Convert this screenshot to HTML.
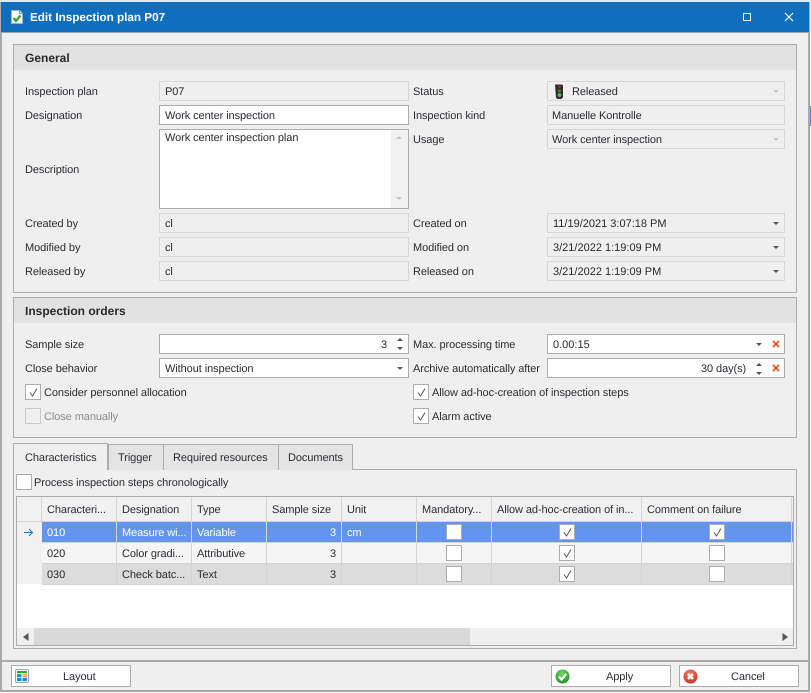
<!DOCTYPE html>
<html><head><meta charset="utf-8">
<style>
html,body{margin:0;padding:0;width:811px;height:693px;overflow:hidden;background:#f6f6f6}
body{position:relative;font:11px "Liberation Sans",sans-serif;color:#2b2b33;text-rendering:geometricPrecision}
div,span,svg{position:absolute;box-sizing:border-box}
.t{white-space:nowrap;line-height:14px;height:14px;margin-top:1px;letter-spacing:-.08px}
.d{letter-spacing:0}
.b{font-weight:bold;font-size:12px;color:#2a2a2a;letter-spacing:0}
.f{border:1px solid #d6d6d6;height:20px;background:#efefef}
.w{border:1px solid #acacac;background:#fff;height:20px}
.g{position:absolute;border:1px solid #acacac;background:#efefef}
.h{position:absolute;background:#e2e2e2;left:0;right:0;top:0;height:25px}
.dn{width:0;height:0;border-left:3.500px solid transparent;border-right:3.500px solid transparent;border-top:3.500px solid #555}
.dd{border-top-color:#c2c2c2}
.up{width:0;height:0;border-left:3.500px solid transparent;border-right:3.500px solid transparent;border-bottom:3.500px solid #555}
.c{width:16px;height:16px;border:1px solid #acacac;background:#fff}
.tab{border:1px solid #acacac;background:#e4e4e4;border-bottom:0}
.col{width:1px;background:#d4d4d4}
.btn{border:1px solid #acacac;background:#fff;height:22px;top:665px}
</style></head><body>
<!-- window -->
<div style="left:0;top:0;width:811px;height:2px;background:#e8e8e8"></div>
<div style="left:809px;top:106px;width:2px;height:20px;background:#5a86d8"></div>
<div style="left:0;top:2px;width:810px;height:690px;background:#efefef;border:2px solid #a9a9a9;border-top:0"></div>
<div style="left:1px;top:2px;width:808px;height:30px;background:#106ebe"></div>
<div style="left:1px;top:32px;width:808px;height:1px;background:#9aa5ae"></div>
<svg style="left:11px;top:10px" width="12" height="14" viewBox="0 0 12 14"><path d="M.5.500h8l3 3v10H.5z" fill="#fff" stroke="#9fb0c4"/><path d="M8.500.500v3h3" fill="#c9d4e0" stroke="#8a9ab0"/><path d="M2.500 8l2.500 3 4.500-5.500" fill="none" stroke="#2fa52a" stroke-width="2.200"/></svg>
<div class="t b" style="left:30px;top:10px;font-size:11.7px;color:#fff">Edit Inspection plan P07</div>
<div style="left:743px;top:13px;width:8px;height:8px;border:1.300px solid #fff"></div>
<svg style="left:784px;top:12px" width="10" height="10" viewBox="0 0 10 10"><path d="M1 1l8 8M9 1l-8 8" stroke="#fff" stroke-width="1.200"/></svg>

<!-- General -->
<div class="g" style="left:13px;top:44px;width:784px;height:249px"><div class="h"></div></div>
<div class="t b" style="left:25px;top:50px">General</div>
<div class="t" style="left:25px;top:84px">Inspection plan</div>
<div class="t" style="left:25px;top:108px">Designation</div>
<div class="t" style="left:25px;top:162px">Description</div>
<div class="t" style="left:25px;top:216px">Created by</div>
<div class="t" style="left:25px;top:240px">Modified by</div>
<div class="t" style="left:25px;top:264px">Released by</div>
<div class="f" style="left:159px;top:81px;width:250px"></div>
<div class="t" style="left:165px;top:84px">P07</div>
<div class="w" style="left:159px;top:105px;width:250px"></div>
<div class="t" style="left:165px;top:108px">Work center inspection</div>
<div class="w" style="left:159px;top:129px;width:250px;height:80px"></div>
<div style="left:391px;top:130px;width:17px;height:78px;background:#f1f1f1"></div>
<div class="t" style="left:165px;top:130px">Work center inspection plan</div>
<div class="up" style="left:396px;top:136px;border-bottom-color:#c2c2c2"></div>
<div class="dn dd" style="left:396px;top:197px"></div>
<div class="f" style="left:159px;top:213px;width:250px"></div><div class="t" style="left:165px;top:216px">cl</div>
<div class="f" style="left:159px;top:237px;width:250px"></div><div class="t" style="left:165px;top:240px">cl</div>
<div class="f" style="left:159px;top:261px;width:250px"></div><div class="t" style="left:165px;top:264px">cl</div>

<div class="t" style="left:413px;top:84px">Status</div>
<div class="t" style="left:413px;top:108px">Inspection kind</div>
<div class="t" style="left:413px;top:132px">Usage</div>
<div class="t" style="left:413px;top:216px">Created on</div>
<div class="t" style="left:413px;top:240px">Modified on</div>
<div class="t" style="left:413px;top:264px">Released on</div>
<div class="f" style="left:547px;top:81px;width:238px"></div>
<svg style="left:555px;top:84px" width="8" height="15" viewBox="0 0 8 15"><path d="M0 .500h7l1 1v12l-2 1.500H2l-1-1.500z" fill="#2d2d2d"/><circle cx="4.500" cy="3" r="1.400" fill="#8a3028"/><circle cx="4.500" cy="7" r="1.400" fill="#8a6a20"/><circle cx="4.500" cy="11" r="1.900" fill="#35d045"/></svg>
<div class="t" style="left:572px;top:84px">Released</div>
<div class="dn dd" style="left:773px;top:90px"></div>
<div class="f" style="left:547px;top:105px;width:238px"></div>
<div class="t" style="left:552px;top:108px">Manuelle Kontrolle</div>
<div class="f" style="left:547px;top:129px;width:238px"></div>
<div class="t" style="left:552px;top:132px">Work center inspection</div>
<div class="dn dd" style="left:773px;top:138px"></div>
<div class="f" style="left:547px;top:213px;width:238px"></div>
<div class="t d" style="left:553px;top:216px">11/19/2021 3:07:18 PM</div>
<div class="dn" style="left:773px;top:222px"></div>
<div class="f" style="left:547px;top:237px;width:238px"></div>
<div class="t d" style="left:553px;top:240px">3/21/2022 1:19:09 PM</div>
<div class="dn" style="left:773px;top:246px"></div>
<div class="f" style="left:547px;top:261px;width:238px"></div>
<div class="t d" style="left:553px;top:264px">3/21/2022 1:19:09 PM</div>
<div class="dn" style="left:773px;top:270px"></div>

<!-- Inspection orders -->
<div class="g" style="left:13px;top:297px;width:784px;height:141px"><div class="h"></div></div>
<div class="t b" style="left:25px;top:303px">Inspection orders</div>
<div class="t" style="left:25px;top:337px">Sample size</div>
<div class="t" style="left:25px;top:361px">Close behavior</div>
<div class="w" style="left:159px;top:334px;width:250px"></div>
<div class="t" style="left:381px;top:337px">3</div>
<div class="up" style="left:397px;top:338px"></div><div class="dn" style="left:397px;top:347px"></div>
<div class="w" style="left:159px;top:358px;width:250px"></div>
<div class="t" style="left:165px;top:361px">Without inspection</div>
<div class="dn" style="left:397px;top:367px"></div>
<div class="t" style="left:413px;top:337px">Max. processing time</div>
<div class="t" style="left:413px;top:361px">Archive automatically after</div>
<div class="w" style="left:547px;top:334px;width:238px"></div>
<div class="t d" style="left:553px;top:337px">0.00:15</div>
<div class="dn" style="left:756px;top:343px"></div>
<svg style="left:772px;top:340px" width="8" height="8" viewBox="0 0 8 8"><path d="M1 1l6 6M7 1l-6 6" stroke="#f0501e" stroke-width="1.800"/></svg>
<div class="w" style="left:547px;top:358px;width:238px"></div>
<div class="t" style="left:701px;top:361px">30 day(s)</div>
<div class="up" style="left:756px;top:363px"></div><div class="dn" style="left:756px;top:372px"></div>
<svg style="left:772px;top:364px" width="8" height="8" viewBox="0 0 8 8"><path d="M1 1l6 6M7 1l-6 6" stroke="#f0501e" stroke-width="1.800"/></svg>

<div class="c" style="left:25px;top:384px"><svg style="left:2px;top:2px" width="11" height="11" viewBox="0 0 11 11"><path d="M2 5.500l2.500 3.500 4.500-7.500" fill="none" stroke="#555" stroke-width="1"/></svg></div>
<div class="t" style="left:44px;top:385px">Consider personnel allocation</div>
<div class="c" style="left:25px;top:408px;background:#efefef;border-color:#c8c8c8"></div>
<div class="t" style="left:44px;top:409px;color:#8a8a8a">Close manually</div>
<div class="c" style="left:413px;top:384px"><svg style="left:2px;top:2px" width="11" height="11" viewBox="0 0 11 11"><path d="M2 5.500l2.500 3.500 4.500-7.500" fill="none" stroke="#555" stroke-width="1"/></svg></div>
<div class="t" style="left:432px;top:385px">Allow ad-hoc-creation of inspection steps</div>
<div class="c" style="left:413px;top:408px"><svg style="left:2px;top:2px" width="11" height="11" viewBox="0 0 11 11"><path d="M2 5.500l2.500 3.500 4.500-7.500" fill="none" stroke="#555" stroke-width="1"/></svg></div>
<div class="t" style="left:432px;top:409px">Alarm active</div>

<!-- Tabs -->
<div class="g" style="left:13px;top:469px;width:784px;height:180px"></div>
<div class="tab" style="left:108px;top:444px;width:56px;height:26px"></div>
<div class="tab" style="left:163px;top:444px;width:116px;height:26px"></div>
<div class="tab" style="left:278px;top:444px;width:75px;height:26px"></div>
<div class="tab" style="left:13px;top:443px;width:95px;height:27px;background:#efefef"></div>
<div style="left:14px;top:468px;width:93px;height:3px;background:#efefef"></div>
<div class="t" style="left:25px;top:450px">Characteristics</div>
<div class="t" style="left:118px;top:450px">Trigger</div>
<div class="t" style="left:173px;top:450px">Required resources</div>
<div class="t" style="left:288px;top:450px">Documents</div>
<div class="c" style="left:16px;top:474px"></div>
<div class="t" style="left:34px;top:475px">Process inspection steps chronologically</div>

<!-- Grid -->
<div style="left:16px;top:496px;width:778px;height:150px;border:1px solid #acacac;background:#fff"></div>
<div style="left:17px;top:497px;width:776px;height:25px;background:#f1f1f1"></div>
<div style="left:17px;top:521px;width:776px;height:1px;background:#d4d4d4"></div>
<div style="left:17px;top:522px;width:25px;height:62px;background:#f1f1f1"></div>
<div style="left:42px;top:522px;width:751px;height:20px;background:#6495ed"></div>
<div style="left:42px;top:543px;width:751px;height:20px;background:#f5f5f5"></div>
<div style="left:42px;top:564px;width:751px;height:20px;background:#dcdcdc"></div>
<div style="left:42px;top:542px;width:751px;height:1px;background:#d4d4d4"></div>
<div style="left:42px;top:563px;width:751px;height:1px;background:#d4d4d4"></div>
<div style="left:42px;top:584px;width:751px;height:1px;background:#d4d4d4"></div>
<div class="col" style="left:41px;top:497px;height:25px"></div>
<div class="col" style="left:116px;top:497px;height:88px"></div>
<div class="col" style="left:191px;top:497px;height:88px"></div>
<div class="col" style="left:266px;top:497px;height:88px"></div>
<div class="col" style="left:341px;top:497px;height:88px"></div>
<div class="col" style="left:416px;top:497px;height:88px"></div>
<div class="col" style="left:491px;top:497px;height:88px"></div>
<div class="col" style="left:641px;top:497px;height:88px"></div>
<div class="col" style="left:791px;top:497px;height:88px"></div>
<div class="t" style="left:47px;top:502px">Characteri...</div>
<div class="t" style="left:122px;top:502px">Designation</div>
<div class="t" style="left:197px;top:502px">Type</div>
<div class="t" style="left:272px;top:502px">Sample size</div>
<div class="t" style="left:347px;top:502px">Unit</div>
<div class="t" style="left:422px;top:502px">Mandatory...</div>
<div class="t" style="left:497px;top:502px">Allow ad-hoc-creation of in...</div>
<div class="t" style="left:647px;top:502px">Comment on failure</div>
<svg style="left:24px;top:528px" width="10" height="9" viewBox="0 0 10 9"><path d="M0 4.500h8.500M5 1l3.500 3.500L5 8" fill="none" stroke="#2a6fb5" stroke-width="1"/></svg>
<div class="t" style="left:47px;top:525px;color:#fff">010</div>
<div class="t" style="left:122px;top:525px;color:#fff">Measure wi...</div>
<div class="t" style="left:197px;top:525px;color:#fff">Variable</div>
<div class="t" style="left:330px;top:525px;color:#fff">3</div>
<div class="t" style="left:347px;top:525px;color:#fff">cm</div>
<div class="t" style="left:47px;top:546px">020</div>
<div class="t" style="left:122px;top:546px">Color gradi...</div>
<div class="t" style="left:197px;top:546px">Attributive</div>
<div class="t" style="left:330px;top:546px">3</div>
<div class="t" style="left:47px;top:567px">030</div>
<div class="t" style="left:122px;top:567px">Check batc...</div>
<div class="t" style="left:197px;top:567px">Text</div>
<div class="t" style="left:330px;top:567px">3</div>
<div class="c" style="left:446px;top:524px"></div>
<div class="c" style="left:446px;top:545px"></div>
<div class="c" style="left:446px;top:566px"></div>
<div class="c" style="left:559px;top:524px"><svg style="left:2px;top:2px" width="11" height="11" viewBox="0 0 11 11"><path d="M2 5.500l2.500 3.500 4.500-7.500" fill="none" stroke="#555" stroke-width="1"/></svg></div>
<div class="c" style="left:559px;top:545px"><svg style="left:2px;top:2px" width="11" height="11" viewBox="0 0 11 11"><path d="M2 5.500l2.500 3.500 4.500-7.500" fill="none" stroke="#555" stroke-width="1"/></svg></div>
<div class="c" style="left:559px;top:566px"><svg style="left:2px;top:2px" width="11" height="11" viewBox="0 0 11 11"><path d="M2 5.500l2.500 3.500 4.500-7.500" fill="none" stroke="#555" stroke-width="1"/></svg></div>
<div class="c" style="left:709px;top:524px"><svg style="left:2px;top:2px" width="11" height="11" viewBox="0 0 11 11"><path d="M2 5.500l2.500 3.500 4.500-7.500" fill="none" stroke="#555" stroke-width="1"/></svg></div>
<div class="c" style="left:709px;top:545px"></div>
<div class="c" style="left:709px;top:566px"></div>
<!-- scrollbar -->
<div style="left:17px;top:628px;width:776px;height:17px;background:#efefef"></div>
<div style="left:34px;top:628px;width:436px;height:17px;background:#d9d9d9"></div>
<svg style="left:23px;top:633px" width="6" height="8" viewBox="0 0 6 8"><path d="M5.500 0v8L0 4z" fill="#555"/></svg>
<svg style="left:782px;top:633px" width="6" height="8" viewBox="0 0 6 8"><path d="M.5 0v8L6 4z" fill="#555"/></svg>

<!-- Footer -->
<div style="left:2px;top:660px;width:806px;height:2px;background:#a9a9a9"></div>
<div class="btn" style="left:11px;width:120px"></div>
<svg style="left:15px;top:669px" width="14" height="14" viewBox="0 0 14 14"><rect x=".5" y=".5" width="13" height="13" rx="1.500" fill="#fff" stroke="#8fa6c4"/><rect x="2" y="2" width="10" height="2.200" fill="#2fa52f"/><rect x="2" y="5.200" width="4.500" height="3" fill="#1e88e5"/><rect x="2" y="9" width="4.500" height="3" fill="#1e88e5"/><rect x="7.500" y="5.200" width="4.500" height="1.100" fill="#f07a1e"/><rect x="7.500" y="7.200" width="4.500" height="1.100" fill="#f07a1e"/><rect x="7.500" y="9" width="4.500" height="3" fill="#1e88e5"/></svg>
<div class="t" style="left:63px;top:669px">Layout</div>
<div class="btn" style="left:551px;width:120px"></div>
<svg style="left:555px;top:669px" width="15" height="15" viewBox="0 0 15 15"><defs><radialGradient id="gg" cx=".45" cy=".3" r=".8"><stop offset="0" stop-color="#6fd86a"/><stop offset="1" stop-color="#138a20"/></radialGradient><radialGradient id="rg" cx=".45" cy=".3" r=".8"><stop offset="0" stop-color="#f5806a"/><stop offset="1" stop-color="#d0241c"/></radialGradient></defs><circle cx="7.500" cy="7.500" r="7" fill="url(#gg)"/><path d="M3.800 7.500l2.700 3 4.700-5.500" fill="none" stroke="#fff" stroke-width="2.200"/></svg>
<div class="t" style="left:606px;top:669px">Apply</div>
<div class="btn" style="left:679px;width:120px"></div>
<svg style="left:683px;top:669px" width="15" height="15" viewBox="0 0 15 15"><circle cx="7.500" cy="7.500" r="7" fill="url(#rg)"/><path d="M5 5l5 5M10 5l-5 5" fill="none" stroke="#fff" stroke-width="2.400"/></svg>
<div class="t" style="left:731px;top:669px">Cancel</div>
</body></html>
